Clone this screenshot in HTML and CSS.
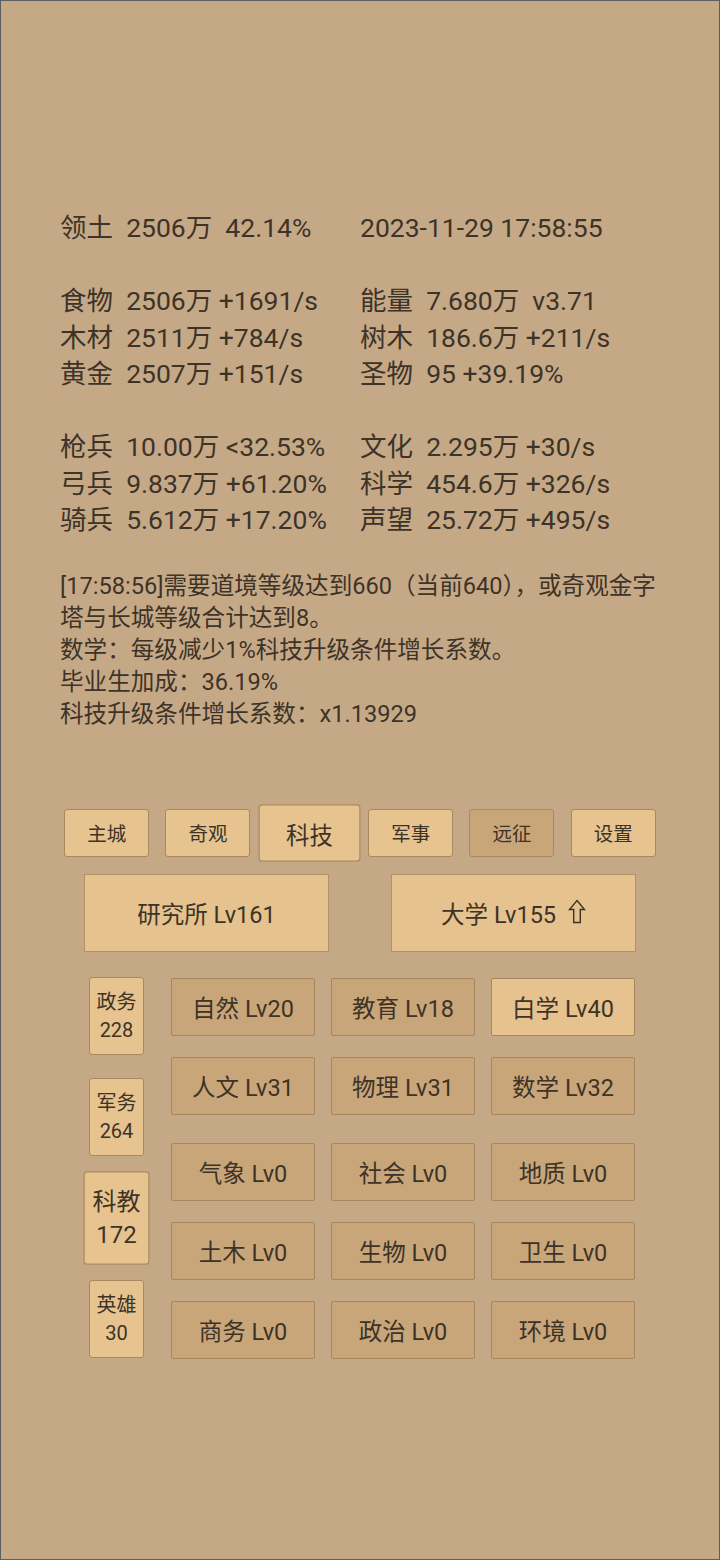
FILE: index.html
```html
<!DOCTYPE html>
<html lang="zh">
<head>
<meta charset="utf-8">
<title>科技</title>
<link rel="stylesheet" href="styles.css">
</head>
<body>
<div class="screen">
  <div class="stats">
    <div class="cell">领土  2506万  42.14%</div><div class="cell">2023-11-29 17:58:55</div>
    <div class="cell"></div><div class="cell"></div>
    <div class="cell">食物  2506万 +1691/s</div><div class="cell">能量  7.680万  v3.71</div>
    <div class="cell">木材  2511万 +784/s</div><div class="cell">树木  186.6万 +211/s</div>
    <div class="cell">黄金  2507万 +151/s</div><div class="cell">圣物  95 +39.19%</div>
    <div class="cell"></div><div class="cell"></div>
    <div class="cell">枪兵  10.00万 &lt;32.53%</div><div class="cell">文化  2.295万 +30/s</div>
    <div class="cell">弓兵  9.837万 +61.20%</div><div class="cell">科学  454.6万 +326/s</div>
    <div class="cell">骑兵  5.612万 +17.20%</div><div class="cell">声望  25.72万 +495/s</div>
  </div>

  <div class="log">
    <div>[17:58:56]需要道境等级达到660（当前640），或奇观金字塔与长城等级合计达到8。</div>
    <div>数学：每级减少1%科技升级条件增长系数。</div>
    <div>毕业生加成：36.19%</div>
    <div>科技升级条件增长系数：x1.13929</div>
  </div>

  <div class="tabs">
    <div class="tab">主城</div>
    <div class="tab">奇观</div>
    <div class="tab active">科技</div>
    <div class="tab">军事</div>
    <div class="tab dim">远征</div>
    <div class="tab">设置</div>
  </div>

  <div class="buildings">
    <div class="building">研究所 Lv161</div>
    <div class="building">大学 Lv155 <svg class="up" width="18" height="25" viewBox="0 0 18 25"><path d="M9 1.5 L16.5 10.5 L12.3 10.5 L12.3 23.5 L5.7 23.5 L5.7 10.5 L1.5 10.5 Z" fill="none" stroke="#3d3327" stroke-width="1.4" stroke-linejoin="miter"/></svg></div>
  </div>

  <div class="lower">
    <div class="depts">
      <div class="dept"><span>政务</span><span>228</span></div>
      <div class="dept"><span>军务</span><span>264</span></div>
      <div class="dept active"><span>科教</span><span>172</span></div>
      <div class="dept"><span>英雄</span><span>30</span></div>
    </div>
    <div class="techs">
      <div class="tech-group">
        <div class="tech">自然 Lv20</div>
        <div class="tech">教育 Lv18</div>
        <div class="tech light">白学 Lv40</div>
        <div class="tech">人文 Lv31</div>
        <div class="tech">物理 Lv31</div>
        <div class="tech">数学 Lv32</div>
      </div>
      <div class="tech-group">
        <div class="tech">气象 Lv0</div>
        <div class="tech">社会 Lv0</div>
        <div class="tech">地质 Lv0</div>
        <div class="tech">土木 Lv0</div>
        <div class="tech">生物 Lv0</div>
        <div class="tech">卫生 Lv0</div>
        <div class="tech">商务 Lv0</div>
        <div class="tech">政治 Lv0</div>
        <div class="tech">环境 Lv0</div>
      </div>
    </div>
  </div>
</div>
</body>
</html>
```

FILE: styles.css
```css
* { box-sizing: border-box; }

body {
  margin: 0;
  font-family: Roboto, "Noto Sans CJK SC", sans-serif;
  color: #3d3327;
}

.screen {
  width: 720px;
  height: 1560px;
  border: 1px solid #5b5f66;
  background: #c5a987;
  overflow: hidden;
}

.stats {
  margin: 209px 0 0 59px;
  display: grid;
  grid-template-columns: 300px 300px;
  font-size: 26.5px;
  line-height: 36.5px;
}

.stats .cell {
  white-space: pre;
  height: 36.5px;
}

.log {
  margin: 31px 0 0 59px;
  width: 601px;
  font-size: 23.6px;
  line-height: 32px;
}

.tabs {
  margin: 79px 0 0 55px;
  display: grid;
  grid-template-columns: repeat(6, 101.33px);
  height: 48px;
}

.tab {
  justify-self: center;
  width: 85px;
  height: 48px;
  display: flex;
  align-items: center;
  justify-content: center;
  font-size: 19.5px;
  background: #e6c38f;
  border: 1px solid #a98a60;
  border-radius: 3px;
}

.tab.active { transform: scale(1.2); }
.tab.dim { background: #c9a67a; }

.buildings {
  margin-top: 17px;
  display: flex;
  justify-content: center;
  gap: 62px;
}

.building {
  width: 245px;
  height: 78px;
  display: flex;
  align-items: center;
  justify-content: center;
  font-size: 23.5px;
  background: #e5c28e;
  border: 1px solid #b09168;
  white-space: pre;
}

.building .up { margin-left: 6px; margin-top: -2px; }

.lower {
  margin: 25px 0 0 82px;
  display: flex;
  gap: 21px;
}

.depts {
  width: 67px;
  display: flex;
  flex-direction: column;
  align-items: center;
  gap: 23px;
}

.dept {
  width: 55px;
  height: 78px;
  display: flex;
  flex-direction: column;
  align-items: center;
  justify-content: center;
  font-size: 20px;
  line-height: 28px;
  background: #e6c38f;
  border: 1px solid #a98a60;
  border-radius: 3px;
}

.dept.active { transform: scale(1.2); }

.techs {
  margin-top: 1.5px;
  display: flex;
  flex-direction: column;
  gap: 28.5px;
}

.tech-group {
  display: grid;
  grid-template-columns: repeat(3, 144px);
  gap: 21.5px 16px;
}

.tech {
  height: 57.5px;
  display: flex;
  align-items: center;
  justify-content: center;
  font-size: 23.5px;
  background: #c9a67a;
  border: 1px solid #a5865e;
  border-radius: 2px;
}

.tech.light { background: #e5c28e; }
```
